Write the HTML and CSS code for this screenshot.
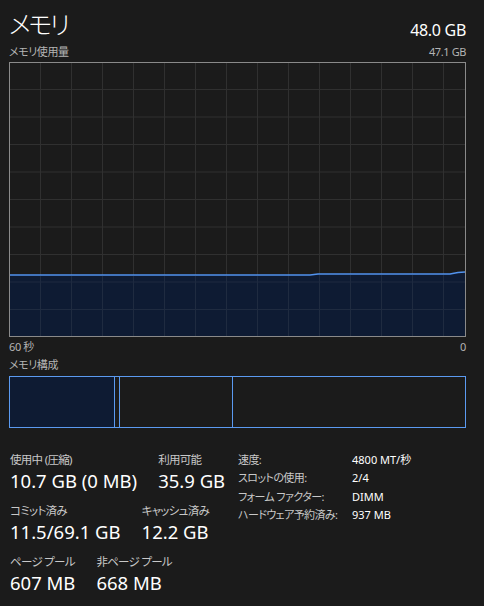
FILE: index.html
```html
<!DOCTYPE html>
<html lang="ja">
<head>
<meta charset="utf-8">
<link rel="stylesheet" href="styles.css">
</head>
<body>
<div class="page">
  <div class="header">
    <div class="title">メモリ</div>
    <div class="total">48.0 GB</div>
  </div>
  <div class="caption-row">
    <span>メモリ使用量</span>
    <span>47.1 GB</span>
  </div>
  <div class="graph">
    <svg width="455" height="273" viewBox="0 0 455 273">
      <g class="grid">
        <path d="M30.5 0V273M61.5 0V273M92.5 0V273M123.5 0V273M154.5 0V273M185.5 0V273M216.5 0V273M247.5 0V273M278.5 0V273M309.5 0V273M340.5 0V273M371.5 0V273M402.5 0V273M433.5 0V273"/>
        <path d="M0 26.5H455M0 54H455M0 81.5H455M0 109H455M0 136.5H455M0 164H455M0 191.5H455M0 219H455M0 246.5H455"/>
      </g>
      <polygon class="area" points="0,212 300,212 308,211 440,211 448,209.5 455,209 455,273 0,273"/>
      <g class="grid-in">
        <path d="M30.5 213V273M61.5 213V273M92.5 213V273M123.5 213V273M154.5 213V273M185.5 213V273M216.5 213V273M247.5 213V273M278.5 212V273M309.5 212V273M340.5 212V273M371.5 212V273M402.5 212V273M433.5 212V273"/>
        <path d="M0 219H455M0 246.5H455"/>
      </g>
      <polyline class="line" points="0,212 300,212 308,211 440,211 448,209.5 455,209"/>
    </svg>
  </div>
  <div class="caption-row axis">
    <span>60 秒</span>
    <span>0</span>
  </div>
  <div class="caption-row comp-label">
    <span>メモリ構成</span>
  </div>
  <div class="composition">
    <div class="seg seg-used"></div>
    <div class="seg seg-mod"></div>
    <div class="seg seg-standby"></div>
    <div class="seg seg-free"></div>
  </div>
  <div class="stats">
    <div class="stats-left">
      <div class="stat-row">
        <div class="stat"><div class="label">使用中 (圧縮)</div><div class="value">10.7 GB (0 MB)</div></div>
        <div class="stat"><div class="label">利用可能</div><div class="value">35.9 GB</div></div>
      </div>
      <div class="stat-row">
        <div class="stat"><div class="label">コミット済み</div><div class="value">11.5/69.1 GB</div></div>
        <div class="stat"><div class="label">キャッシュ済み</div><div class="value">12.2 GB</div></div>
      </div>
      <div class="stat-row">
        <div class="stat"><div class="label">ページ プール</div><div class="value">607 MB</div></div>
        <div class="stat"><div class="label">非ページ プール</div><div class="value">668 MB</div></div>
      </div>
    </div>
    <div class="stats-right">
      <div class="k">速度:</div><div class="v">4800 MT/秒</div>
      <div class="k">スロットの使用:</div><div class="v">2/4</div>
      <div class="k">フォーム ファクター:</div><div class="v">DIMM</div>
      <div class="k">ハードウェア予約済み:</div><div class="v">937 MB</div>
    </div>
  </div>
</div>
</body>
</html>
```

FILE: styles.css
```css
html, body {
  margin: 0;
  padding: 0;
  background: #1b1b1b;
}
body {
  font-family: "Noto Sans", "Noto Sans CJK JP", sans-serif;
  font-feature-settings: "palt";
  color: #ffffff;
  width: 484px;
  height: 606px;
  overflow: hidden;
}
.page {
  width: 457px;
  padding-left: 9px;
}
.header {
  display: flex;
  justify-content: space-between;
  align-items: flex-end;
  height: 42px;
}
.title {
  font-size: 25px;
  font-weight: 300;
  letter-spacing: -2.5px;
  line-height: 34px;
  margin-bottom: 1px;
}
.total {
  font-size: 16px;
  letter-spacing: -0.3px;
  line-height: 20px;
  margin-bottom: 2px;
}
.caption-row {
  display: flex;
  justify-content: space-between;
  font-size: 11px;
  letter-spacing: -0.4px;
  line-height: 20px;
  height: 20px;
  color: #b4b4b4;
}
.graph {
  width: 455px;
  height: 273px;
  border: 1px solid #8a8a8a;
  background: #1b1b1b;
}
.graph svg {
  display: block;
}
.grid path {
  stroke: #303030;
  stroke-width: 1;
  fill: none;
}
.grid-in path {
  stroke: #1f2b40;
  stroke-width: 1;
  fill: none;
}
.area {
  fill: #0e1b33;
}
.line {
  fill: none;
  stroke: #5293ee;
  stroke-width: 1.5;
}
.axis {
  height: 18px;
}
.comp-label {
  height: 21px;
}
.composition {
  display: flex;
  width: 455px;
  height: 50px;
  border: 1px solid #5b9af0;
}
.seg {
  height: 100%;
}
.seg + .seg {
  border-left: 1px solid #5b9af0;
}
.seg-used {
  width: 104px;
  background: #0e1b33;
}
.seg-mod {
  width: 4px;
}
.seg-standby {
  width: 112px;
}
.seg-free {
  flex: 1;
}
.stats {
  display: flex;
  margin-top: 24px;
}
.stats-left {
  width: 228px;
  padding-left: 1px;
}
.stat-row {
  display: flex;
  gap: 21px;
  margin-bottom: 9px;
}
.label {
  font-size: 11.5px;
  letter-spacing: -0.7px;
  line-height: 16px;
  color: #c8c8c8;
}
.value {
  font-size: 18.5px;
  line-height: 26px;
  color: #ffffff;
}
.stats-right {
  display: grid;
  grid-template-columns: 114px auto;
  grid-auto-rows: 18.3px;
  font-size: 11px;
  line-height: 18px;
  align-content: start;
  margin-top: -1px;
}
.k {
  color: #c8c8c8;
  letter-spacing: -0.6px;
}
.v {
  color: #ffffff;
}
```
